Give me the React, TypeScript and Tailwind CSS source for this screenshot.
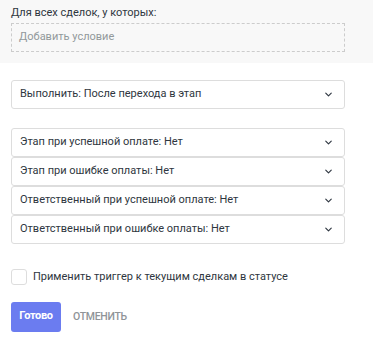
import { ChevronDown } from "lucide-react";

const stageSelects = [
  "Этап при успешной оплате: Нет",
  "Этап при ошибке оплаты: Нет",
  "Ответственный при успешной оплате: Нет",
  "Ответственный при ошибке оплаты: Нет",
];

function Select({ label }: { label: string }) {
  return (
    <button
      type="button"
      className="flex h-[29px] w-[334px] items-center justify-between rounded-[3px] border border-[#dddddd] bg-white pl-[8px] pr-[10px] text-left text-[11px] text-[#2e3640]"
    >
      <span>{label}</span>
      <ChevronDown className="h-[11px] w-[11px] text-[#2e3640]" strokeWidth={2.5} aria-hidden="true" />
    </button>
  );
}

export default function App() {
  return (
    <div className="min-h-[339px] w-[373px] bg-white font-['Roboto',sans-serif]">
      {/* Condition block */}
      <div className="h-[63px] bg-[#f8f8f8] px-[11px] pt-[4px]">
        <p className="text-[11px] leading-[17px] text-[#2e3640]">Для всех сделок, у которых:</p>
        <div className="mt-[2px] flex h-[29px] w-[334px] items-center border border-dashed border-[#cccccc] px-[7px] text-[11px] text-[#92989b]">
          Добавить условие
        </div>
      </div>

      <div className="px-[11px]">
        <div className="mt-[17px]">
          <Select label="Выполнить: После перехода в этап" />
        </div>

        <div className="mt-[19px] flex flex-col">
          {stageSelects.map((label) => (
            <Select key={label} label={label} />
          ))}
        </div>

        <label className="mt-[25px] flex items-center gap-[6px] text-[11px] text-[#2e3640]">
          <span className="h-[16px] w-[16px] rounded-[3px] border border-[#dddddd] bg-white" />
          Применить триггер к текущим сделкам в статусе
        </label>

        <div className="mt-[16px] flex items-center gap-[12px]">
          <button
            type="button"
            className="h-[30px] w-[50px] rounded-[3px] bg-[#6b7cf0] text-[11px] font-bold tracking-[-0.3px] text-white"
          >
            Готово
          </button>
          <button
            type="button"
            className="text-[10.5px] font-medium uppercase tracking-[-0.3px] text-[#8f9498]"
          >
            Отменить
          </button>
        </div>
      </div>
    </div>
  );
}
